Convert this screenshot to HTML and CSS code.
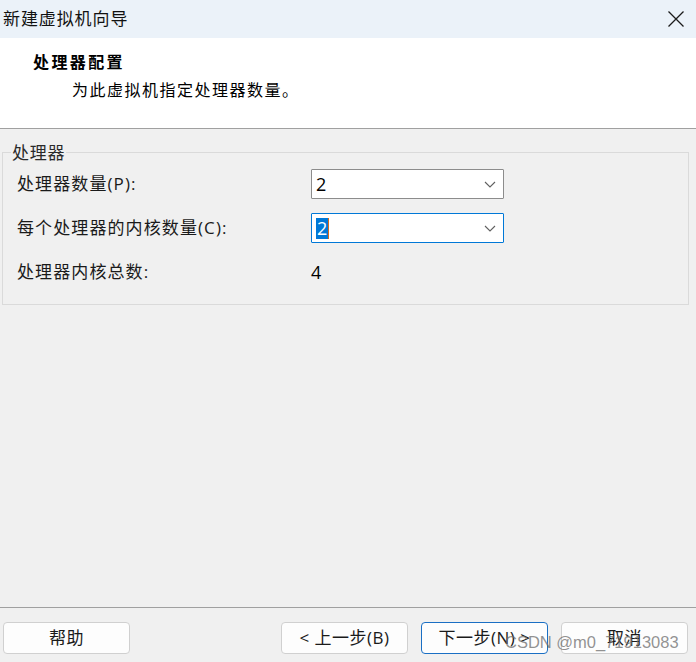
FILE: index.html
```html
<!DOCTYPE html>
<html lang="zh-CN">
<head>
<meta charset="utf-8">
<title>新建虚拟机向导</title>
<link rel="stylesheet" href="styles.css">
</head>
<body>
<div class="window">
  <div class="titlebar">
    <span class="title">新建虚拟机向导</span>
    <svg class="close" width="18" height="18" viewBox="0 0 18 18"><path d="M1.5 1.5 L16.5 16.5 M16.5 1.5 L1.5 16.5" stroke="#1b1b1b" stroke-width="1.3" fill="none"/></svg>
  </div>
  <div class="header">
    <div class="h-title">处理器配置</div>
    <div class="h-sub">为此虚拟机指定处理器数量。</div>
  </div>
  <div class="main">
    <div class="group">
      <span class="legend">处理器</span>
      <div class="row">
        <span class="label">处理器数量(P):</span>
        <div class="select">
          <span class="value">2</span>
          <svg class="chev" width="12" height="7" viewBox="0 0 12 7"><path d="M1 1 L6 6 L11 1" stroke="#606060" stroke-width="1.1" fill="none"/></svg>
        </div>
      </div>
      <div class="row">
        <span class="label">每个处理器的内核数量(C):</span>
        <div class="select focus">
          <span class="value sel">2</span><span class="caret"></span>
          <svg class="chev" width="12" height="7" viewBox="0 0 12 7"><path d="M1 1 L6 6 L11 1" stroke="#606060" stroke-width="1.1" fill="none"/></svg>
        </div>
      </div>
      <div class="row">
        <span class="label">处理器内核总数:</span>
        <span class="total">4</span>
      </div>
    </div>
  </div>
  <div class="footer">
    <button class="btn">帮助</button>
    <div class="spacer"></div>
    <button class="btn">&lt; 上一步(B)</button>
    <button class="btn default">下一步(N) &gt;</button>
    <button class="btn">取消</button>
  </div>
  <div class="watermark">CSDN @m0_71913083</div>
</div>
</body>
</html>
```
FILE: styles.css
```css
* { box-sizing: border-box; }
html, body { margin: 0; padding: 0; }
body {
  width: 696px;
  height: 662px;
  background: #f0f0f0;
  font-family: "Open Sans", "Noto Sans CJK SC", sans-serif;
  color: #1a1a1a;
  overflow: hidden;
}
.window {
  position: relative;
  width: 696px;
  height: 662px;
  display: flex;
  flex-direction: column;
}
.titlebar {
  height: 38px;
  background: #ebf2f9;
  display: flex;
  align-items: center;
  justify-content: space-between;
  padding: 0 11px 2px 3px;
}
.title {
  font-family: "Noto Sans CJK SC", sans-serif;
  font-size: 17px;
  letter-spacing: 0.9px;
  line-height: 20px;
  color: #111;
}
.close { display: block; margin-top: 2px; }
.header {
  height: 91px;
  background: #ffffff;
  border-bottom: 1px solid #a0a0a0;
  padding: 12px 0 0 33px;
}
.h-title {
  font-family: "Noto Sans CJK SC", sans-serif;
  font-weight: 700;
  font-size: 16px;
  line-height: 22px;
  letter-spacing: 2.4px;
  color: #000;
}
.h-sub {
  font-family: "Noto Sans CJK SC", sans-serif;
  font-size: 16px;
  line-height: 22px;
  letter-spacing: 1.5px;
  margin: 6px 0 0 39px;
  color: #000;
}
.main {
  flex: 1;
  padding: 23px 0 0 2px;
}
.group {
  position: relative;
  width: 687px;
  height: 153px;
  border: 1px solid #dadada;
  padding: 16px 0 0 14px;
  display: flex;
  flex-direction: column;
  gap: 14px;
}
.legend {
  position: absolute;
  left: 8px;
  top: -11px;
  padding: 0 1px;
  background: #f0f0f0;
  font-family: "Noto Sans CJK SC", sans-serif;
  font-size: 17px;
  line-height: 20px;
  letter-spacing: 0.8px;
  color: #2a2a2a;
}
.row {
  height: 30px;
  display: flex;
  align-items: center;
}
.label {
  width: 294px;
  font-size: 17px;
  letter-spacing: 1.1px;
  line-height: 20px;
  color: #1a1a1a;
}
.select {
  width: 193px;
  height: 30px;
  background: #ffffff;
  border: 1px solid #8c8c8c;
  border-radius: 1px;
  display: flex;
  align-items: center;
  padding-left: 4px;
  position: relative;
}
.select.focus { border-color: #0078d7; }
.value {
  font-size: 18px;
  line-height: 20px;
  color: #000;
}
.value.sel {
  background: #0078d7;
  color: #fff;
  padding: 0 1px;
  line-height: 21px;
}
.caret {
  width: 1px;
  height: 21px;
  background: #d86a1a;
}
.chev {
  position: absolute;
  right: 7px;
  top: 11px;
}
.total {
  font-size: 18px;
  line-height: 20px;
  color: #000;
}
.footer {
  height: 55px;
  border-top: 1px solid #a0a0a0;
  padding: 14px 8px 0 3px;
  display: flex;
  align-items: flex-start;
  gap: 13px;
}
.spacer { flex: 1; }
.btn {
  width: 127px;
  height: 32px;
  background: #fdfdfd;
  border: 1px solid #d0d0d0;
  border-radius: 4px;
  font-family: "Open Sans", "Noto Sans CJK SC", sans-serif;
  font-size: 17px;
  letter-spacing: 0.5px;
  line-height: 20px;
  color: #1a1a1a;
  padding: 0;
}
.btn.default { border-color: #1a6fc4; }
.watermark {
  position: absolute;
  left: 505px;
  top: 631px;
  font-family: "Liberation Sans", Arial, sans-serif;
  font-size: 16.5px;
  line-height: 22px;
  color: rgba(110, 110, 110, 0.75);
  white-space: nowrap;
  pointer-events: none;
}
```
